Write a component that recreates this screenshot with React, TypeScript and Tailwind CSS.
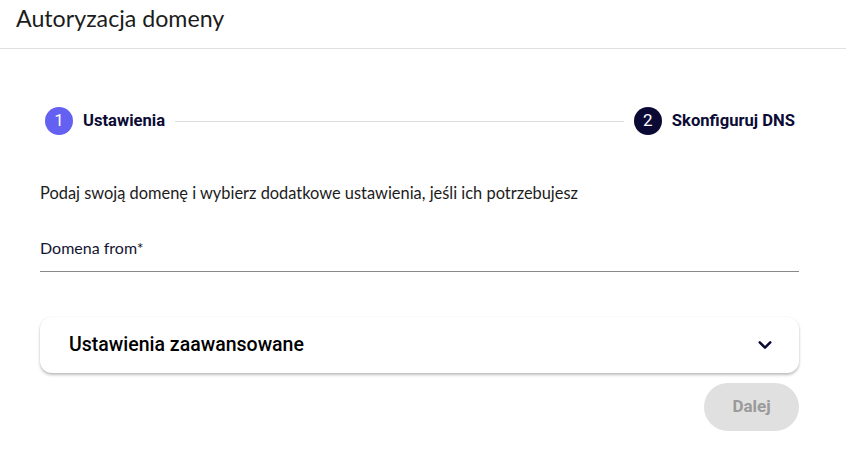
import React from "react";

const lato = { fontFamily: "Lato, 'Noto Sans', sans-serif" };
const roboto = { fontFamily: "Roboto, sans-serif" };

export default function App() {
  return (
    <div className="w-[846px] h-[449px] bg-white text-[#1a1a2e]">
      <div className="h-[49px] border-b border-[#e0e0e0] px-4 flex items-center">
        <h1
          className="text-[23.2px] leading-none text-[#1c1c1c] -mt-[11px]"
          style={lato}
        >
          Autoryzacja domeny
        </h1>
      </div>

      <div className="pl-10 pr-[47px] pt-[58px]">
        {/* stepper */}
        <div className="flex items-center pl-[5px] pr-1 h-7" style={roboto}>
          <div className="w-7 h-7 rounded-full bg-[#6461f2] text-white text-[17px] flex items-center justify-center">
            1
          </div>
          <span className="ml-[10px] text-[16.6px] font-bold text-[#0b0b35]">
            Ustawienia
          </span>
          <div className="flex-1 h-px bg-[#dcdcdc] mx-[10px]" />
          <div className="w-7 h-7 rounded-full bg-[#0b0a35] text-white text-[17px] flex items-center justify-center">
            2
          </div>
          <span className="ml-[10px] text-[16.6px] font-bold text-[#0b0b35]">
            Skonfiguruj DNS
          </span>
        </div>

        <p
          className="mt-[46px] text-[16.4px] leading-[24px] text-[#1c1c1c]"
          style={lato}
        >
          Podaj swoją domenę i wybierz dodatkowe ustawienia, jeśli ich potrzebujesz
        </p>

        <div className="mt-[31px] border-b border-[#888] pb-[11px]">
          <label
            className="block text-[16px] leading-[24px] text-[#141432]"
            style={lato}
          >
            Domena from*
          </label>
        </div>

        <div
          className="mt-[45px] h-[56px] rounded-[12px] bg-white shadow-[0_2px_3px_rgba(0,0,0,0.25),0_0_2px_rgba(0,0,0,0.06)] flex items-center justify-between pl-[29px] pr-[25px]"
          style={roboto}
        >
          <span className="text-[19.5px] font-medium text-black">
            Ustawienia zaawansowane
          </span>
          <svg width="18" height="18" viewBox="0 0 24 24" fill="none">
            <path
              d="M5 8.5l7 7 7-7"
              stroke="#0b0a35"
              strokeWidth="3.4"
              strokeLinecap="round"
              strokeLinejoin="round"
            />
          </svg>
        </div>

        <div className="flex justify-end mt-[10px]">
          <button
            className="w-[95px] h-[48px] rounded-full bg-[#e0e0e0] text-[#9a9a9a] text-[17px] font-bold"
            style={roboto}
          >
            Dalej
          </button>
        </div>
      </div>
    </div>
  );
}
